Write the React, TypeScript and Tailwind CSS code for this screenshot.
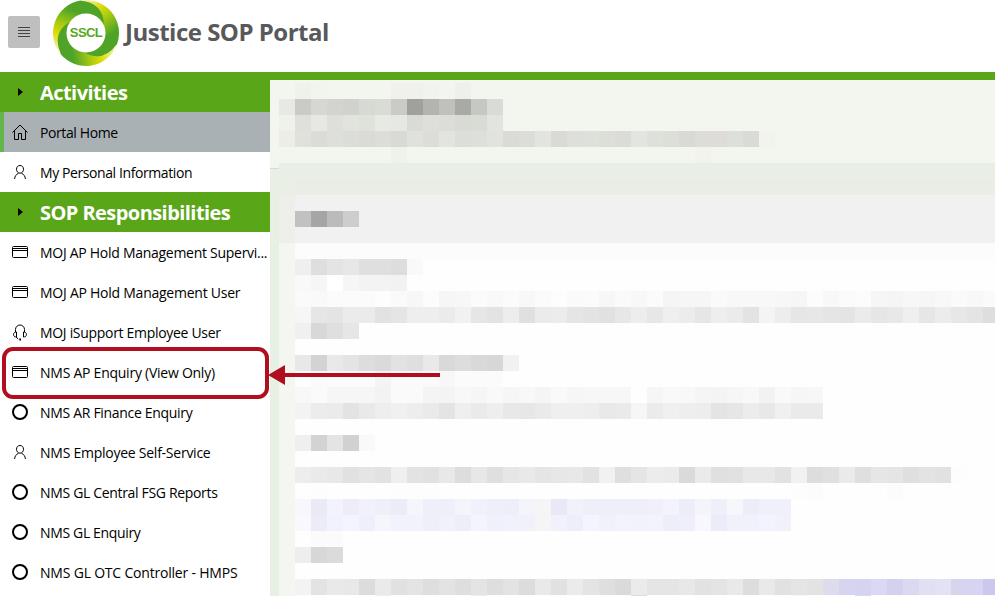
import type { ReactNode } from 'react';

type IconName = 'home' | 'person' | 'window' | 'headset' | 'circle';

const activities: { icon: IconName; label: string; active?: boolean; tracking: string }[] = [
  { icon: 'home', label: 'Portal Home', active: true, tracking: 'tracking-[-0.4px]' },
  { icon: 'person', label: 'My Personal Information', tracking: 'tracking-[-0.41px]' },
];

const responsibilities: { icon: IconName; label: string; active?: boolean; tracking: string }[] = [
  { icon: 'window', label: 'MOJ AP Hold Management Supervi...', tracking: 'tracking-[-0.28px]' },
  { icon: 'window', label: 'MOJ AP Hold Management User', tracking: 'tracking-[-0.25px]' },
  { icon: 'headset', label: 'MOJ iSupport Employee User', tracking: 'tracking-[-0.31px]' },
  { icon: 'window', label: 'NMS AP Enquiry (View Only)', tracking: 'tracking-[-0.25px]' },
  { icon: 'circle', label: 'NMS AR Finance Enquiry', tracking: 'tracking-[-0.31px]' },
  { icon: 'person', label: 'NMS Employee Self-Service', tracking: 'tracking-[-0.25px]' },
  { icon: 'circle', label: 'NMS GL Central FSG Reports', tracking: 'tracking-[-0.33px]' },
  { icon: 'circle', label: 'NMS GL Enquiry', tracking: 'tracking-[-0.35px]' },
  { icon: 'circle', label: 'NMS GL OTC Controller - HMPS', tracking: 'tracking-[-0.2px]' },
];

// Redacted content: one string per 16px row. Two digits are a grey level,
// six are a full colour, "." keeps the row's background, "x*n" repeats x.
const P = 'f3f6ef';
const G = 'f4f6f2';
const rows: [string, string][] = [
  [P, '. eff1eb f2f5ee .*4 f0f1ec f0f1ec f1f4ee . eef0eb'],
  [P, 'e7eae4 cacbc7 d6d7d2 d3d4d0 d1d1cd d7d9d3 d9dcd5 cacbc7 a0a19c b2b4af c0c0bc a9aaa5 c6c8c3 d9dcd6'],
  [P, 'eff1eb dfdfdb e6e8e3 dedfda e1e4dd dfe2db e7eae3 e6e8e3 d9dbd6 dfdfda dcdcd8 d8dad4 d9dcd5 e2e4df'],
  [P, 'ebede6 dfe1da dbdcd8 dddfdb dbddd7 dadbd7 dcddd9 d9dad6 dfe1dc dcddd9 e2e5df dcdfd8 dde0da e1e3de dadbd7 dcddd9 e2e4df d9dad6 dedfda dee0da dcdfd8 dbdcd8 e3e5e1 dee1da dcdfd8 d9dad6 dddcd8 dddcd8 dddfdb d9dbd6 f1f3ec'],
  [P, '.*7 eff2eb .*18 f1f3ec'],
  ['e9efe5', ''],
  ['eaede6', 'e9efe5'],
  ['f1f1f1', 'eeefeb'],
  ['f1f1f1', 'eeefeb c1 a5 bb cd'],
  ['f1f1f1', 'eeefeb'],
  ['fcfcfc', G],
  ['fefefe', G + ' ef de e4 e7 df df dd f9'],
  ['fefefe', G + ' f9 f6 ff f6 f3 f3 f2'],
  ['fefefe', G + ' fa f9 fb fb fb fd fa f7 fc f6 f7 fb f9 fb f8 fb fd fa fb f7 fa f8 fb f5 f6 f6 fa f8 f8 f8 f7 f6 fc f8 fb fc f6 f5 f7 f6 f8 fa f8 fa'],
  ['fefefe', G + ' f6 e6 e4 eb eb e2 e5 ee ee eb f1 e6 e3 ed e0 eb ec e5 e3 e1 e7 ed e7 ef ec e6 ee eb e3 f4 ed e6 e7 e5 e4 eb e6 e8 ef e6 ec e7 e4 de'],
  ['fefefe', G + ' f0 d8 df e6'],
  ['fefefe', G],
  ['fefefe', G + ' e8 d3 e9 e4 dd da e2 df e9 d9 dd d9 d7 f1'],
  ['fefefe', G + ' fe fa fb fb fb f4 fa fa fa f7 fb fb fb'],
  ['fefefe', G + ' f8 fa f6 f6 f6 f3 fa fa f4 f4 f8 f6 f9 f6 f8 f5 f9 f6 f7 f7 f7 fe f6 f9 f8 f5 f4 f6 f8 f2 f9 f6 f7'],
  ['fefefe', G + ' f3 ec eb e3 e9 ee f0 ed ea e4 ef ea ee e8 e7 ea ef ef ee e9 ea f6 eb f0 ee ed e4 e6 ec e8 f0 ea ea'],
  ['fefefe', G],
  ['fefefe', G + ' ef d3 e4 d1 f9'],
  ['fefefe', G],
  ['fefefe', G + ' ed ea e8 e1 e5 e2 ef e3 e1 e8 dd e7 df e6 e9 e5 e7 e8 e2 f1 df e5 ec eb da ea e0 e1 e8 e8 e2 f1 dd e0 ea df e6 e5 df e3 e1 fd'],
  ['fefefe', G + ' . fd .*4 fd fd fd .*22 fd fc .*4 fc'],
  ['fefefe', G + ' f8f7fd eaeaf7 f3f3fd edecf8 f1f1fb efeffa ecebf8 f5f6fb efeffa efeffa f4f5fa f1f1fb efeffa edeef9 f4f5fa f5 e9e8f6 f1f1fa efeffa*4 f0effa f3f3fd edecf9 f4f5fa efeff9 f6f7fb edecf9 f0f0fb f0f0fb'],
  ['fefefe', G + ' f9f8fd ecebf8 f2f2fc f4f4fe efeffa f5f6fb f1f2fb f1f2fb efeffa f1f1fb eeeef9 f4f4fd f0f0fb f1f1fb f1f1fb f5 f1f1fb eeeefa f4f4fe f1f1fb f3f3fd f2f2fc f3f3fd eeeef9 efeffa f7f7fd ecebf8 f1f1fb f1f1fb f3f3fd f1f1fb'],
  ['fefefe', G + ' fe fb fb'],
  ['fefefe', G + ' ee d7 db'],
  ['fefefe', G],
  ['fefefe', G + ' f3 e3 e9 e8 dc ea e1 e4 de e3 de e4 de e3 dc e9 e1 eb e4 df da eb e5 e5 e8 e2 e4 e9 dd e9 e1 e5 e3 dddced d5d5f1 d4d4f0 d9d9f3 d2d2ef d9d9f2 dfe0f4 e3e2f4 d5d5f0 d6d5f1 cac9ed'],
  ['fefefe', G + ' .*5 ee .*5 ee .*9 dd .*9 f4 .*3 d8d8f0'],
];

function expand(line: string): string[] {
  return line
    .split(' ')
    .filter(Boolean)
    .flatMap((token) => {
      const [value, count] = token.split('*');
      const colour = value === '.' ? 'transparent' : '#' + (value.length === 2 ? value.repeat(3) : value);
      return Array<string>(Number(count ?? 1)).fill(colour);
    });
}

function Icon({ name }: { name: IconName }) {
  const shapes: Record<IconName, ReactNode> = {
    home: <path d="M.5 8.500 8 1l7.500 7.500M2.500 7v8.500h4v-6h3v6h4V7" />,
    person: (
      <path d="M8 1.500c2.300 0 3.500 1.600 3.500 3.700S10.200 9.200 8 9.200 4.500 7.300 4.500 5.200 5.700 1.500 8 1.500ZM2.500 15c.3-2.800 1.900-4.700 4-5.900M13.500 15c-.3-2.800-1.900-4.700-4-5.900" />
    ),
    window: (
      <path d="M1.500 2.500h13a1 1 0 0 1 1 1v9a1 1 0 0 1-1 1h-13a1 1 0 0 1-1-1v-9a1 1 0 0 1 1-1ZM.5 4.500h15M.5 6.500h15" />
    ),
    headset: (
      <>
        <path d="M3.500 8V5.500a4.500 4.500 0 0 1 9 0V8M4.500 8v5c-1.800 0-3-1-3-2.500S2.700 8 4.500 8ZM11.500 8v5c1.800 0 3-1 3-2.500S13.300 8 11.500 8ZM4.500 13c.2 1 .8 1.700 1.700 2" />
        <path d="M7.300 15.500h1.700" strokeWidth="1.800" />
      </>
    ),
    circle: <circle cx="8" cy="8" r="7" strokeWidth="2" />,
  };
  return (
    <svg viewBox="0 0 16 16" className="size-4 shrink-0 overflow-visible fill-none stroke-black">
      {shapes[name]}
    </svg>
  );
}

function NavItem({ icon, label, active, tracking }: { icon: IconName; label: string; active?: boolean; tracking: string }) {
  return (
    <li className={`flex h-10 items-center border-l-4 pl-2 ${active ? 'border-[#62b64b] bg-[#aab1b5]' : 'border-transparent bg-white'}`}>
      <Icon name={icon} />
      <span className={`ml-3 whitespace-nowrap pt-0.5 text-[14px] leading-5 text-black ${tracking}`}>{label}</span>
    </li>
  );
}

function SectionHeader({ title }: { title: string }) {
  return (
    <h2 className="flex h-10 items-center bg-[#59a618] pl-[18px] text-[20px] font-bold text-white">
      <svg viewBox="0 0 5 8" className="h-2 w-[5px] fill-black">
        <path d="M0 0v8l5-4Z" />
      </svg>
      <span className="ml-[17px] whitespace-nowrap pt-0.5 tracking-[-0.56px]">{title}</span>
    </h2>
  );
}

function Logo() {
  return (
    <div className="ml-3 grid h-[66px] w-[68px] place-items-center">
      <svg viewBox="0 0 66 66" className="col-start-1 row-start-1 size-[66px]">
        <defs>
          <linearGradient id="arm" gradientUnits="userSpaceOnUse" x1="30" y1="0" x2="58" y2="34">
            <stop offset="0" stopColor="#f6f5c4" />
            <stop offset=".38" stopColor="#dcdc08" />
            <stop offset=".65" stopColor="#a2c812" />
            <stop offset="1" stopColor="#4fa428" />
          </linearGradient>
        </defs>
        <circle cx="33" cy="33" r="25" fill="none" stroke="#8cbc1e" strokeWidth="13" />
        {[0, 120, 240].map((angle) => (
          <path
            key={angle}
            transform={`rotate(${angle} 33 33)`}
            fill="url(#arm)"
            d="M27.300.5A33 33 0 0 1 64 44.300Q49.400 63.900 29.700 51.700A19 19 0 0 0 50.900 26.500Q51.500 3.300 27.300.5Z"
          />
        ))}
        <circle cx="33" cy="33" r="19.500" fill="#fff" />
      </svg>
      <span className="col-start-1 row-start-1 font-['Liberation_Sans',sans-serif] text-[13px] font-bold tracking-[-0.6px] text-[#56a822]">
        SSCL
      </span>
    </div>
  );
}

export default function App() {
  return (
    <div className="relative flex h-[596px] w-[995px] flex-col overflow-hidden bg-white font-['Open_Sans','Noto_Sans',sans-serif]">
      <header className="flex h-[72px] shrink-0 items-start pl-2">
        <button className="mt-4 flex size-8 items-center justify-center rounded-[2px] bg-[#bfbfbf]">
          <svg viewBox="0 0 12 10" className="h-2.5 w-3 stroke-[#444]">
            <path d="M0 .5h12M0 3.500h12M0 6.500h12M0 9.500h12" />
          </svg>
        </button>
        <Logo />
        <h1 className="ml-[5px] mt-4 whitespace-nowrap text-[24px] font-bold leading-8 tracking-[-0.5px] text-[#58595b]">Justice SOP Portal</h1>
      </header>
      <div className="flex min-h-0 flex-1">
        <nav className="w-[270px] shrink-0">
          <SectionHeader title="Activities" />
          <ul>{activities.map((item) => <NavItem key={item.label} {...item} />)}</ul>
          <SectionHeader title="SOP Responsibilities" />
          <ul>{responsibilities.map((item) => <NavItem key={item.label} {...item} />)}</ul>
        </nav>
        <main className="flex min-w-0 flex-1 flex-col border-t-8 border-[#59a618]">
          <div className="flex min-h-0 flex-1 bg-[#f3f6ef]">
            <div className="flex w-[9px] shrink-0 flex-col">
              <div className="h-[89px] border-b border-[#d5dad0]" />
              <div className="flex-1 bg-[#e8efe5]" />
            </div>
            <div className="min-w-0 flex-1 overflow-hidden pt-[3px]">
              {rows.map(([background, line], y) => (
                <div key={y} className="flex h-4" style={{ backgroundColor: '#' + background }}>
                  {expand(line).map((colour, x) => (
                    <span key={x} className="size-4 shrink-0" style={{ backgroundColor: colour }} />
                  ))}
                </div>
              ))}
            </div>
          </div>
        </main>
      </div>
      <div className="absolute left-[2px] top-[347px] h-[52px] w-[267px] rounded-[11px] border-4 border-[#b00f1f]" />
      <svg viewBox="0 0 172 20" className="absolute left-[268px] top-[365px] h-5 w-[172px] fill-[#b00f1f]">
        <path d="M0 10 17 0v8h155v4H17v8Z" />
      </svg>
    </div>
  );
}
